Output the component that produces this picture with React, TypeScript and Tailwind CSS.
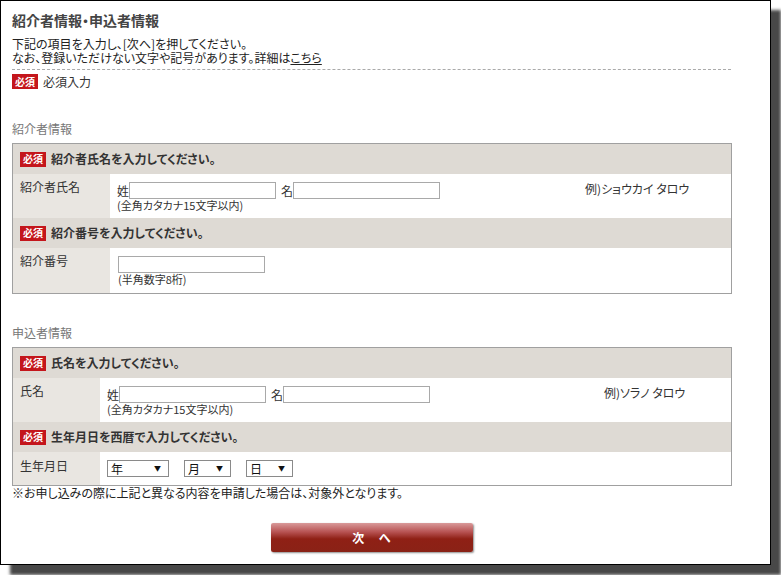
import React from "react";

const Badge = () => (
  <span className="inline-flex h-[15px] w-[26px] items-center justify-center bg-[#c4161c] text-[10px] font-bold leading-none text-white">
    必須
  </span>
);

const HeaderRow = ({ text }: { text: string }) => (
  <div className="flex h-[30px] items-center gap-[5px] bg-[#dedad4] pl-[7px]">
    <Badge />
    <span className="text-[12px] font-bold leading-none text-[#333]">{text}</span>
  </div>
);

const TextInput = ({ w = 147 }: { w?: number }) => (
  <span
    className="inline-block h-[17px] border border-[#a9a9a9] bg-white"
    style={{ width: w }}
  />
);

const Select = ({ label, w }: { label: string; w: number }) => (
  <span
    className="inline-flex h-[17px] items-center justify-between border border-[#8a8a8a] bg-white pl-[3px] pr-[7px] text-[12px] leading-none text-[#111]"
    style={{ width: w }}
  >
    <span>{label}</span>
    <span className="text-[7px]">▼</span>
  </span>
);

const NameRow = ({
  label,
  labelW,
  leftW,
  example,
}: {
  label: string;
  labelW: number;
  leftW: number;
  example: string;
}) => (
  <div className="flex h-[44px] bg-white">
    <div
      className="bg-[#e9e6e1] pl-[7px] pt-[6px] text-[12px] leading-[14px] text-[#333]"
      style={{ width: labelW }}
    >
      {label}
    </div>
    <div className="flex pl-[7px] pt-[8px]">
      <div style={{ width: leftW }} className="flex flex-col">
        <div className="flex items-center text-[12px] leading-none text-[#333]">
          <span>姓</span>
          <TextInput />
          <span className="ml-[5px]">名</span>
          <TextInput />
        </div>
        <div className="mt-[-1px] text-[11px] leading-[14px] text-[#333]">(全角カタカナ15文字以内)</div>
      </div>
      <div className="text-[12px] leading-[14px] text-[#333]">{example}</div>
    </div>
  </div>
);

export default function App() {
  return (
    <div
      className="h-[575px] w-[781px] overflow-hidden bg-white [font-feature-settings:'palt']"
      style={{ fontFamily: '"MS PGothic", "Noto Sans CJK JP", "Noto Sans", sans-serif' }}
    >
      <div className="h-[565px] w-[771px] border border-black bg-white pl-[11px] shadow-[10px_10px_3px_rgba(40,40,40,0.85)]">
        <div className="w-[720px]">
          <h1 className="pt-[9px] text-[14px] font-bold leading-[20px] text-[#444]">
            紹介者情報・申込者情報
          </h1>
          <div className="mt-[7px] text-[12px] leading-[14px] text-[#222]">
            <div>下記の項目を入力し、[次へ]を押してください。</div>
            <div>
              なお、登録いただけない文字や記号があります。詳細は<span className="underline">こちら</span>
            </div>
          </div>
          <div className="mt-[4px] w-[719px] border-t border-dashed border-[#aaa]" />
          <div className="mt-[4px] flex items-center gap-[5px] text-[12px] leading-none text-[#333]">
            <Badge />
            <span>必須入力</span>
          </div>

          <div className="mt-[33px] text-[12px] leading-[14px] text-[#777]">紹介者情報</div>
          <div className="mt-[7px] border border-[#a0a0a0]">
            <HeaderRow text="紹介者氏名を入力してください。" />
            <NameRow label="紹介者氏名" labelW={97} leftW={468} example="例)ショウカイ タロウ" />
            <HeaderRow text="紹介番号を入力してください。" />
            <div className="flex h-[45px] bg-white">
              <div className="w-[97px] bg-[#e9e6e1] pl-[7px] pt-[6px] text-[12px] leading-[14px] text-[#333]">
                紹介番号
              </div>
              <div className="flex flex-col pl-[8px] pt-[8px]">
                <TextInput />
                <div className="mt-[-1px] text-[11px] leading-[14px] text-[#333]">(半角数字8桁)</div>
              </div>
            </div>
          </div>

          <div className="mt-[32px] text-[12px] leading-[14px] text-[#777]">申込者情報</div>
          <div className="mt-[7px] border border-[#a0a0a0]">
            <HeaderRow text="氏名を入力してください。" />
            <NameRow label="氏名" labelW={87} leftW={497} example="例)ソラノ タロウ" />
            <HeaderRow text="生年月日を西暦で入力してください。" />
            <div className="flex h-[33px] bg-white">
              <div className="w-[87px] bg-[#e9e6e1] pl-[7px] pt-[7px] text-[12px] leading-[14px] text-[#333]">
                生年月日
              </div>
              <div className="flex items-start gap-[15px] pl-[7px] pt-[8px]">
                <Select label="年" w={62} />
                <Select label="月" w={47} />
                <Select label="日" w={47} />
              </div>
            </div>
          </div>
          <div className="text-[12px] leading-[13px] text-[#222]">
            ※お申し込みの際に上記と異なる内容を申請した場合は、対象外となります。
          </div>

          <div className="mt-[24px] flex justify-center">
            <button className="flex h-[29px] w-[202px] items-center justify-center rounded-[2px] bg-[linear-gradient(to_bottom,#d99a9a_0%,#b85454_30%,#8f2015_55%,#8a2216_100%)] text-[12px] font-bold tracking-[0.1em] text-white shadow-[1px_1px_2px_rgba(0,0,0,0.45)]">
              次　へ
            </button>
          </div>
        </div>
      </div>
    </div>
  );
}
